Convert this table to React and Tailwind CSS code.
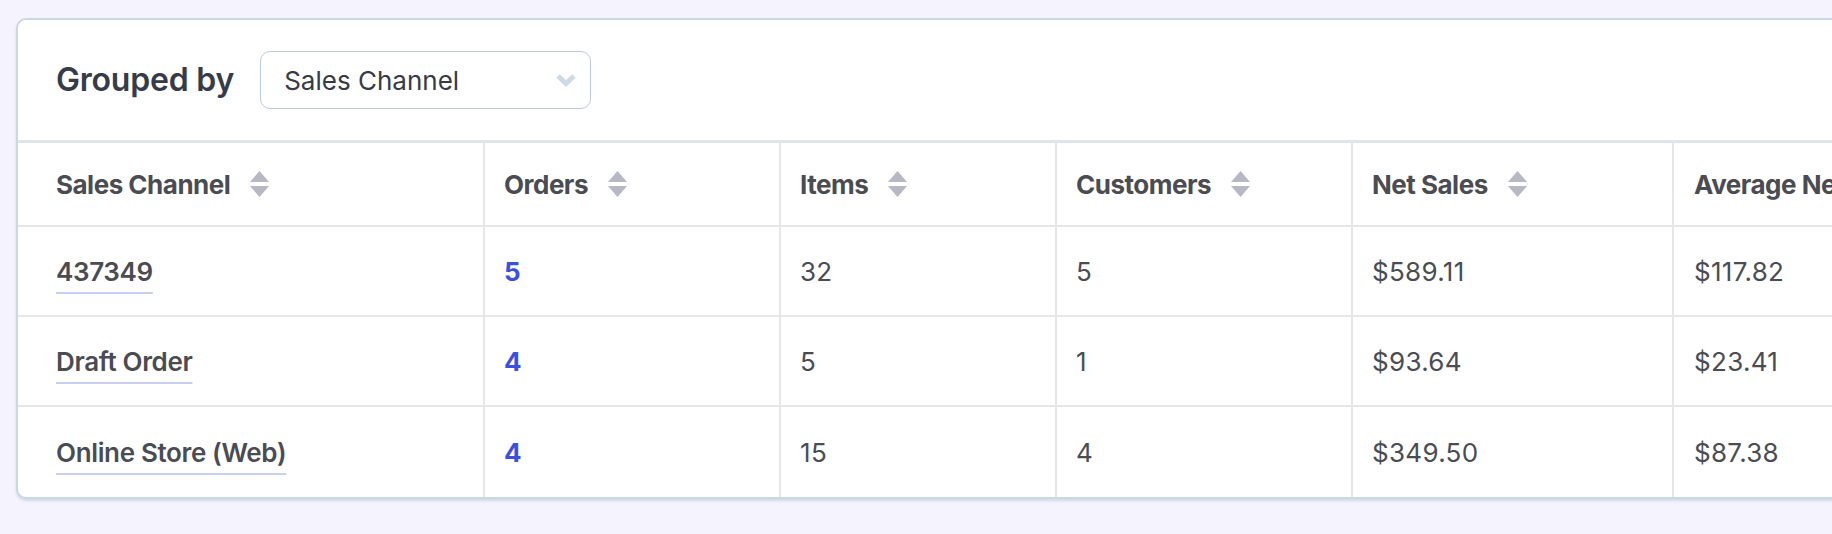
const columns = [
  { key: "channel", label: "Sales Channel", width: "w-[467px]", pad: "pl-[38px]" },
  { key: "orders", label: "Orders", width: "w-[296px]", pad: "pl-[19px]" },
  { key: "items", label: "Items", width: "w-[276px]", pad: "pl-[19px]" },
  { key: "customers", label: "Customers", width: "w-[296px]", pad: "pl-[19px]" },
  { key: "netSales", label: "Net Sales", width: "w-[321px]", pad: "pl-[19px]" },
  { key: "avgNet", label: "Average Net Sales", width: "w-[420px]", pad: "pl-[20px]" },
];

const rows = [
  { channel: "437349", orders: 5, items: 32, customers: 5, netSales: "$589.11", avgNet: "$117.82" },
  { channel: "Draft Order", orders: 4, items: 5, customers: 1, netSales: "$93.64", avgNet: "$23.41" },
  { channel: "Online Store (Web)", orders: 4, items: 15, customers: 4, netSales: "$349.50", avgNet: "$87.38" },
];

const SortIcon = () => (
  <svg width="19" height="27" viewBox="0 0 19 27" className="ml-[20px] shrink-0">
    <polygon points="9.5,0 19,11 0,11" fill="#b6b8c4" />
    <polygon points="0,15 19,15 9.5,26" fill="#b6b8c4" />
  </svg>
);

const Chevron = () => (
  <svg width="22" height="14" viewBox="0 0 22 14">
    <polyline points="3,3 11,10.5 19,3" fill="none" stroke="#cfdbe4" strokeWidth="5" strokeLinejoin="miter" />
  </svg>
);

const App = () => {
  return (
    <div className="w-full h-[534px] overflow-hidden bg-[#f5f4fe] pt-[18px] pl-[16px] font-['Inter',sans-serif]">
      <div className="w-[2200px] bg-white border-2 border-[#ccd8e1] rounded-[10px] shadow-[0_2px_3px_rgba(140,165,190,0.35)]">
        {/* Group by selector */}
        <div className="h-[120px] flex items-center pl-[38px]">
          <span className="text-[32px] font-semibold text-[#363b47] tracking-[-0.2px]">Grouped by</span>
          <div className="ml-[26px] w-[331px] h-[58px] border-[1.5px] border-[#bccbd8] rounded-[10px] flex items-center justify-between pl-[23px] pr-[13px]">
            <span className="text-[26px] text-[#363b47]">Sales Channel</span>
            <Chevron />
          </div>
        </div>

        {/* Table */}
        <div className="border-t-[3px] border-[#dfe5ea]">
          <div className="flex h-[84px] border-b-2 border-[#e7e7ea]">
            {columns.map((col) => (
              <div key={col.key} className={`${col.width} ${col.pad} shrink-0 flex items-center border-r-2 border-[#e7e7ea]`}>
                <span className="text-[26px] font-bold text-[#4b4c52] tracking-[-0.5px] whitespace-nowrap">{col.label}</span>
                {col.key !== "avgNet" && <SortIcon />}
              </div>
            ))}
          </div>
          {rows.map((row, i) => (
            <div key={i} className={`flex h-[90px] ${i < rows.length - 1 ? "border-b-2 border-[#e7e7ea]" : ""}`}>
              {columns.map((col) => (
                <div key={col.key} className={`${col.width} ${col.pad} shrink-0 flex items-center border-r-2 border-[#e7e7ea]`}>
                  {col.key === "channel" ? (
                    <span className="text-[26px] font-semibold text-[#4b4c52] tracking-[-0.35px] underline decoration-[#c8cff0] decoration-[1.5px] underline-offset-[11px]">
                      {row.channel}
                    </span>
                  ) : col.key === "orders" ? (
                    <span className="text-[26px] font-bold text-[#3c50e0]">{row.orders}</span>
                  ) : (
                    <span className="text-[26px] text-[#4b4c52] tracking-[0.3px]">{row[col.key]}</span>
                  )}
                </div>
              ))}
            </div>
          ))}
        </div>
      </div>
    </div>
  );
};

export default App;
